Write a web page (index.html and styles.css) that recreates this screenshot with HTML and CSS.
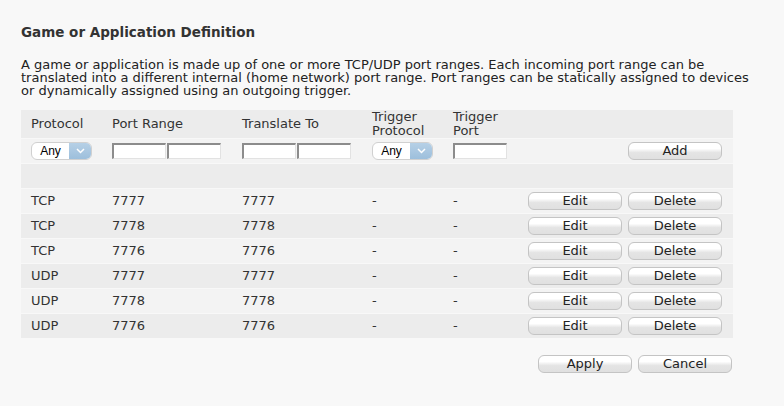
FILE: index.html
```html
<!DOCTYPE html>
<html lang="en">
<head>
<meta charset="utf-8">
<title>Game or Application Definition</title>
<link rel="stylesheet" href="styles.css">
</head>
<body>
<div class="page">
  <h2 class="title">Game or Application Definition</h2>
  <p class="intro">A game or application is made up of one or more TCP/UDP port ranges. Each incoming port range can be translated into a different internal (home network) port range. Port ranges can be statically assigned to devices or dynamically assigned using an outgoing trigger.</p>

  <table class="ports">
    <colgroup>
      <col class="c-proto"><col class="c-range"><col class="c-range"><col class="c-trig"><col class="c-tport"><col class="c-edit"><col class="c-del">
    </colgroup>
    <thead>
      <tr class="head">
        <th>Protocol</th>
        <th>Port Range</th>
        <th>Translate To</th>
        <th>Trigger<br>Protocol</th>
        <th>Trigger<br>Port</th>
        <th></th>
        <th></th>
      </tr>
    </thead>
    <tbody>
      <tr class="entry">
        <td><span class="select"><span class="select-val">Any</span><span class="select-arrow"><svg width="9" height="6" viewBox="0 0 9 6"><path d="M1 1l3.5 3.5L8 1" fill="none" stroke="#fff" stroke-width="1.5"/></svg></span></span></td>
        <td><span class="pair"><input class="field" type="text"><input class="field" type="text"></span></td>
        <td><span class="pair"><input class="field" type="text"><input class="field" type="text"></span></td>
        <td><span class="select"><span class="select-val">Any</span><span class="select-arrow"><svg width="9" height="6" viewBox="0 0 9 6"><path d="M1 1l3.5 3.5L8 1" fill="none" stroke="#fff" stroke-width="1.5"/></svg></span></span></td>
        <td><input class="field" type="text"></td>
        <td class="btn-cell"></td>
        <td class="btn-cell"><button class="btn">Add</button></td>
      </tr>
      <tr class="spacer"><td colspan="7"></td></tr>
      <tr><td>TCP</td><td>7777</td><td>7777</td><td>-</td><td>-</td><td class="btn-cell"><button class="btn">Edit</button></td><td class="btn-cell"><button class="btn">Delete</button></td></tr>
      <tr><td>TCP</td><td>7778</td><td>7778</td><td>-</td><td>-</td><td class="btn-cell"><button class="btn">Edit</button></td><td class="btn-cell"><button class="btn">Delete</button></td></tr>
      <tr><td>TCP</td><td>7776</td><td>7776</td><td>-</td><td>-</td><td class="btn-cell"><button class="btn">Edit</button></td><td class="btn-cell"><button class="btn">Delete</button></td></tr>
      <tr><td>UDP</td><td>7777</td><td>7777</td><td>-</td><td>-</td><td class="btn-cell"><button class="btn">Edit</button></td><td class="btn-cell"><button class="btn">Delete</button></td></tr>
      <tr><td>UDP</td><td>7778</td><td>7778</td><td>-</td><td>-</td><td class="btn-cell"><button class="btn">Edit</button></td><td class="btn-cell"><button class="btn">Delete</button></td></tr>
      <tr><td>UDP</td><td>7776</td><td>7776</td><td>-</td><td>-</td><td class="btn-cell"><button class="btn">Edit</button></td><td class="btn-cell"><button class="btn">Delete</button></td></tr>
    </tbody>
  </table>

  <div class="actions">
    <button class="btn">Apply</button>
    <button class="btn">Cancel</button>
  </div>
</div>
</body>
</html>
```

FILE: styles.css
```css
html, body {
  margin: 0;
  padding: 0;
  background: #f8f8f8;
}

body {
  font-family: "DejaVu Sans", Verdana, sans-serif;
  font-size: 13px;
  color: #333;
}

.page {
  width: 712px;
  padding: 24px 0 0 21px;
}

.title {
  margin: 0;
  font-size: 13.5px;
  line-height: 17px;
  font-weight: bold;
  color: #333;
}

.intro {
  width: 740px;
  margin: 17px 0 13px;
  line-height: 13px;
  color: #222;
}

.ports {
  width: 712px;
  table-layout: fixed;
  border-collapse: collapse;
}

.c-proto { width: 81px; }
.c-range { width: 130px; }
.c-trig { width: 81px; }
.c-tport { width: 82px; }
.c-edit { width: 100px; }
.c-del { width: 108px; }

.ports th,
.ports td {
  padding: 0 0 0 10px;
  height: 24px;
  text-align: left;
  vertical-align: middle;
  font-weight: normal;
  border-bottom: 1px solid #f8f8f8;
  color: #333;
  line-height: 14px;
}

.ports tr { background: #f3f3f3; }
.ports tbody tr:nth-child(even) { background: #ececec; }
.ports .head { background: #ececec; }
.ports .head th { height: 27px; }

.ports td.btn-cell { padding-left: 3px; }

/* dropdown with blue arrow cap */
.select {
  display: inline-flex;
  width: 61px;
  height: 18px;
  box-sizing: border-box;
  border: 1px solid #d0d0d0;
  border-radius: 6px;
  background: #fff;
  overflow: hidden;
  vertical-align: middle;
}
.select-val {
  flex: 1;
  text-align: center;
  line-height: 16px;
  color: #000;
  font-family: "Liberation Sans", Arial, sans-serif;
  font-size: 12px;
}
.select-arrow {
  width: 22px;
  display: flex;
  align-items: center;
  justify-content: center;
  background: linear-gradient(#b6d0e6, #9dbfdc);
}

.pair { display: inline-flex; gap: 1px; vertical-align: middle; }

.field {
  width: 54px;
  height: 16px;
  box-sizing: border-box;
  margin: 0;
  padding: 0;
  border: 1px solid #e2e2e2;
  border-top: 2px solid #8c8c8c;
  border-left: 2px solid #8c8c8c;
  background: #fff;
  vertical-align: middle;
}

.btn {
  width: 94px;
  height: 18px;
  margin: 0;
  padding: 0;
  box-sizing: border-box;
  border: 1px solid #c4c4c4;
  border-radius: 6px;
  background: linear-gradient(#ffffff 0%, #ffffff 35%, #e4e4e4 60%, #e0e0e0 100%);
  font-family: "DejaVu Sans", Verdana, sans-serif;
  font-size: 13px;
  line-height: 16px;
  color: #222;
  vertical-align: middle;
}

.actions {
  display: flex;
  justify-content: flex-end;
  gap: 6px;
  width: 711px;
  margin-top: 16px;
}
```
